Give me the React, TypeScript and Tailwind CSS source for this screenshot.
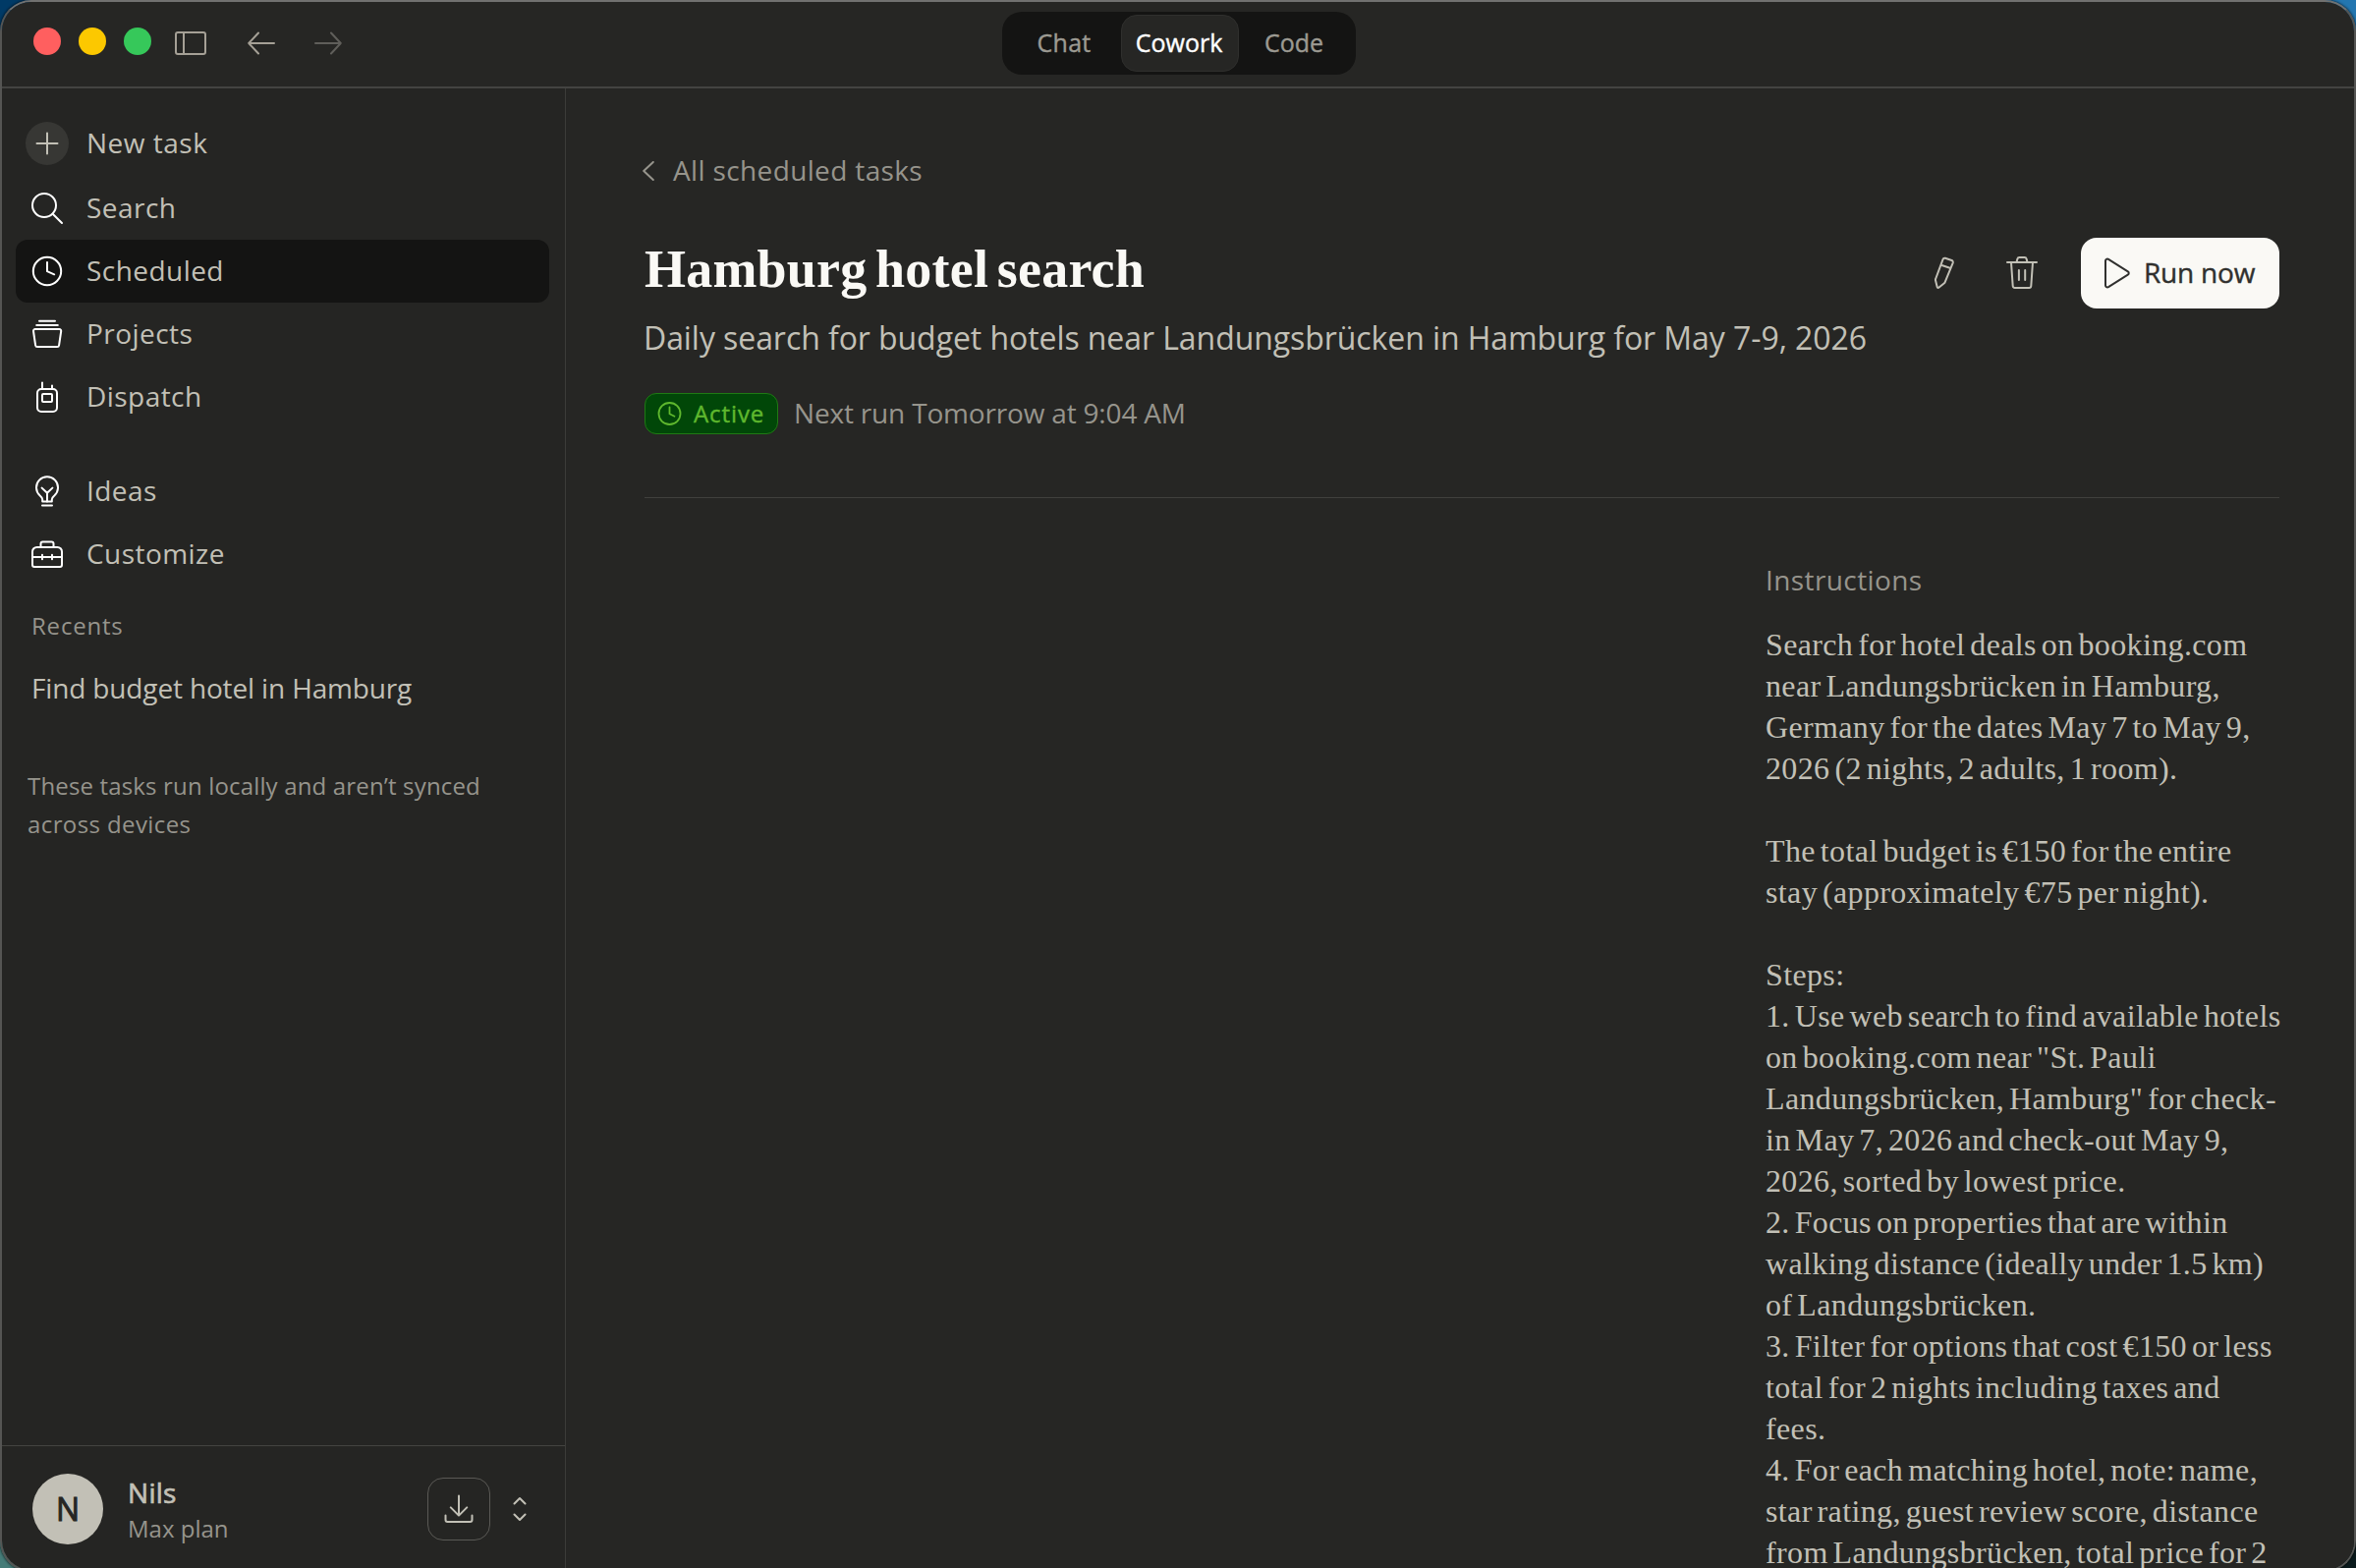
import React from 'react'

type IconProps = { children: React.ReactNode }

const NavIcon = ({ children }: IconProps) => (
  <svg
    viewBox="0 0 48 48"
    className="w-12 h-12 shrink-0 text-white"
    fill="none"
    stroke="currentColor"
    strokeWidth="2"
    strokeLinecap="round"
    strokeLinejoin="round"
  >
    {children}
  </svg>
)

const navItems = [
  {
    title: 'Search',
    icon: (
      <>
        <circle cx="21" cy="21" r="12" />
        <path d="M29.7 29.7 39 39" />
      </>
    ),
  },
  {
    title: 'Scheduled',
    active: true,
    icon: (
      <>
        <circle cx="24" cy="24" r="14.2" />
        <path d="M24 15v9.2l7.2 3.1" />
      </>
    ),
  },
  {
    title: 'Projects',
    icon: (
      <>
        <path d="M16 10.8h16M13.2 14.9h21.6" />
        <path d="M11.8 19h24.6a1.8 1.8 0 0 1 1.8 2l-2.1 14.4a2 2 0 0 1-2 1.7H14.1a2 2 0 0 1-2-1.7L10 21a1.8 1.8 0 0 1 1.8-2Z" />
      </>
    ),
  },
  {
    title: 'Dispatch',
    icon: (
      <>
        <rect x="14" y="16" width="20" height="23" rx="4" />
        <rect x="19" y="21" width="10" height="8" rx="1" />
        <path d="M19 9.5V16M29 12.5V16" />
      </>
    ),
  },
]

const toolItems = [
  {
    title: 'Ideas',
    icon: (
      <>
        <path d="M19.2 34.6h9.6v-2.2c0-1.8.9-2.6 2.5-3.9a11 11 0 1 0-14.6 0c1.6 1.3 2.5 2.1 2.5 3.9v2.2Z" />
        <path d="m18.6 20.6 5.4 5.2 5.4-5.2M24 25.8v8.8M19 38.6h10" />
      </>
    ),
  },
  {
    title: 'Customize',
    icon: (
      <>
        <path d="M13.5 17h21a4.5 4.5 0 0 1 4.5 4.5V35a2 2 0 0 1-2 2H11a2 2 0 0 1-2-2V21.5a4.5 4.5 0 0 1 4.5-4.5Z" />
        <path d="M17.5 17v-3.5a2 2 0 0 1 2-2h9a2 2 0 0 1 2 2V17M9 27h30M19 24.8v4.4M29 24.8v4.4" />
      </>
    ),
  },
]

const instructions = [
  'Search for hotel deals on booking.com',
  'near Landungsbrücken in Hamburg,',
  'Germany for the dates May 7 to May 9,',
  '2026 (2 nights, 2 adults, 1 room).',
  '',
  'The total budget is €150 for the entire',
  'stay (approximately €75 per night).',
  '',
  'Steps:',
  '1. Use web search to find available hotels',
  'on booking.com near "St. Pauli',
  'Landungsbrücken, Hamburg" for check-',
  'in May 7, 2026 and check-out May 9,',
  '2026, sorted by lowest price.',
  '2. Focus on properties that are within',
  'walking distance (ideally under 1.5 km)',
  'of Landungsbrücken.',
  '3. Filter for options that cost €150 or less',
  'total for 2 nights including taxes and',
  'fees.',
  '4. For each matching hotel, note: name,',
  'star rating, guest review score, distance',
  'from Landungsbrücken, total price for 2',
]

const NavRow = ({ title, icon, active }: { title: string; icon: React.ReactNode; active?: boolean }) => (
  <a className={`flex items-center h-16 pl-2 gap-4 rounded-xl ${active ? 'bg-[#141413]' : ''}`}>
    <NavIcon>{icon}</NavIcon>
    <span className="pb-0.5 text-[28px] leading-10 tracking-[0.45px]">{title}</span>
  </a>
)

const TitleBar = () => (
  <header className="grid grid-cols-[1018px_360px_1fr] items-center h-[88px] pb-0.5 shrink-0 bg-[#262624] border-b-2 border-[#434341]">
    <div className="flex items-center pl-8 text-[#a5a096]">
      <div className="flex gap-[18px] mb-1">
        <span className="w-7 h-7 rounded-full bg-[#ff5f5f]"></span>
        <span className="w-7 h-7 rounded-full bg-[#fcc800]"></span>
        <span className="w-7 h-7 rounded-full bg-[#36c85a]"></span>
      </div>
      <svg viewBox="0 0 32 24" className="w-8 h-6 ml-6" fill="none" stroke="currentColor" strokeWidth="2">
        <rect x="1" y="1" width="30" height="22" rx="2" />
        <path d="M9 1v22" />
      </svg>
      <svg viewBox="0 0 28 24" className="w-7 h-6 ml-[42px]" fill="none" stroke="currentColor" strokeWidth="2" strokeLinecap="round" strokeLinejoin="round">
        <path d="M27 12H1.2M11 1.5 1.2 12 11 22.5" />
      </svg>
      <svg viewBox="0 0 28 24" className="w-7 h-6 ml-10 text-[#5f5e5a]" fill="none" stroke="currentColor" strokeWidth="2" strokeLinecap="round" strokeLinejoin="round">
        <path d="M1 12h25.8M17 1.5 26.8 12 17 22.5" />
      </svg>
    </div>
    <div className="flex h-16 p-[3px] rounded-[20px] bg-[#141413] text-[25px] text-[#9c9a92] [-webkit-text-stroke:0.4px]">
      <button className="w-[118px] pb-px pl-0.5 tracking-[0.3px]">Chat</button>
      <button className="w-[120px] pb-px pr-0.5 rounded-2xl bg-[#262624] border border-[#2f2f2d] text-white">Cowork</button>
      <button className="w-[112px] pb-px">Code</button>
    </div>
  </header>
)

const Sidebar = () => (
  <aside className="flex flex-col w-[574px] shrink-0 bg-[#252523] border-r border-[#3c3c39] text-[#c2c0b6]">
    <nav className="flex flex-col pt-6 pl-3.5 pr-4">
      <a className="flex items-center h-16 pl-2.5 mb-0.5 gap-[18px]">
        <span className="flex items-center justify-center w-11 h-11 rounded-full bg-[#373734]">
          <svg viewBox="0 0 24 24" className="w-6 h-6" fill="none" stroke="currentColor" strokeWidth="2" strokeLinecap="round">
            <path d="M12 1.5v21M1.5 12h21" />
          </svg>
        </span>
        <span className="pb-0.5 text-[28px] leading-10 tracking-[0.5px]">New task</span>
      </a>
      {navItems.map((item) => (
        <NavRow key={item.title} {...item} />
      ))}
      <div className="mt-8">
        {toolItems.map((item) => (
          <NavRow key={item.title} {...item} />
        ))}
      </div>
    </nav>
    <h3 className="mt-[23px] pl-[30px] text-2xl leading-9 tracking-[0.8px] text-[#96948c]">Recents</h3>
    <a className="mt-[13px] pl-[30px] text-[28px] leading-[64px] tracking-[-0.15px]">Find budget hotel in Hamburg</a>
    <p className="mt-12 pl-[26px] text-2xl leading-[39px] tracking-[0.16px] text-[#96948c]">
      These tasks run locally and aren’t synced
      <br />
      <span className="tracking-[0.4px]">across devices</span>
    </p>
    <div className="flex items-start mt-auto h-[127px] pt-7 pl-[31px] border-t border-[#444441]">
      <div className="flex items-center justify-center w-[72px] h-[72px] pb-px rounded-full bg-[#c2c0b6] text-[#262624] text-[32px] [-webkit-text-stroke:1px]">
        N
      </div>
      <div className="pt-px pl-[25px] w-[330px]">
        <div className="text-[28px] leading-9 tracking-[0.3px] [-webkit-text-stroke:0.7px]">Nils</div>
        <div className="mt-px text-2xl leading-9 text-[#96948c]">Max plan</div>
      </div>
      <div className="flex items-center justify-center w-16 h-16 mt-1 rounded-2xl border border-[#5a5955]">
        <svg viewBox="0 0 30 30" className="w-[30px] h-[30px]" fill="none" stroke="currentColor" strokeWidth="2" strokeLinecap="round" strokeLinejoin="round">
          <path d="M15 1.5v20M6.8 13.4 15 21.6l8.2-8.2M1.5 21.5V26a2 2 0 0 0 2 2h23a2 2 0 0 0 2-2v-4.5" />
        </svg>
      </div>
      <svg viewBox="0 0 14 28" className="w-3.5 h-7 mt-[22px] ml-[23px]" fill="none" stroke="currentColor" strokeWidth="2" strokeLinecap="round" strokeLinejoin="round">
        <path d="M1.5 8.5 7 3l5.5 5.5M1.5 19.5 7 25l5.5-5.5" />
      </svg>
    </div>
  </aside>
)

const TaskPage = () => (
  <main className="flex-1 pt-[63px] pl-20 pr-[76px] bg-[#262624] text-[#c2c0b6]">
    <a className="flex items-center -ml-0.5 h-10 gap-[19px] text-[#96948c]">
      <svg viewBox="0 0 12 20" className="w-3 h-5 mt-px" fill="none" stroke="currentColor" strokeWidth="2" strokeLinecap="round" strokeLinejoin="round">
        <path d="M10.8 1 1.2 10l9.6 9" />
      </svg>
      <span className="text-[28px] leading-10 tracking-[0.36px]">All scheduled tasks</span>
    </a>

    <div className="flex items-start mt-[49px]">
      <div className="flex-1">
        <h1 className="pt-0.5 font-['Liberation_Serif',serif] text-[54px] leading-[60px] font-bold tracking-[0.2px] [word-spacing:-5px] text-[#faf9f5]">
          Hamburg hotel search
        </h1>
        <p className="mt-[18px] -ml-px text-[32px] leading-[44px] tracking-[-0.07px] whitespace-nowrap">
          Daily search for budget hotels near Landungsbrücken in Hamburg for May 7-9, 2026
        </p>
      </div>
      <svg viewBox="0 0 26 36" className="w-[26px] h-9 mt-[18px]" fill="none" stroke="currentColor" strokeWidth="2" strokeLinejoin="round">
        <path d="m13.9 2.8 6.6 2.2a2 2 0 0 1 1.2 2.6L13.6 27.4a2 2 0 0 1-.7.9l-5.6 4.4a1 1 0 0 1-1.6-.6L4 25.2a2 2 0 0 1 .1-1.2l7.4-19.8a2 2 0 0 1 2.4-1.4ZM9.6 9.8l9.8 3.2" />
      </svg>
      <svg viewBox="0 0 36 36" className="w-9 h-9 mt-[18px] ml-12" fill="none" stroke="currentColor" strokeWidth="2" strokeLinecap="round" strokeLinejoin="round">
        <path d="M3 7h30M12.5 7l.9-3.5A2 2 0 0 1 15.3 2h5.4a2 2 0 0 1 1.9 1.5l.9 3.5M7 7l1.7 24a2 2 0 0 0 2 1.9h14.6a2 2 0 0 0 2-1.9L29 7M14.9 15v10M21.2 15v10" />
      </svg>
      <button className="flex items-center w-[202px] h-[72px] ml-[42px] pl-[22px] gap-3 rounded-2xl bg-[#faf9f5] text-[#30302e]">
        <svg viewBox="0 0 30 32" className="w-[30px] h-8" fill="none" stroke="currentColor" strokeWidth="2" strokeLinejoin="round">
          <path d="M3 3.6a2 2 0 0 1 3-1.7l19.8 12.4a2 2 0 0 1 0 3.4L6 30.1a2 2 0 0 1-3-1.7V3.6Z" />
        </svg>
        <span className="pb-0.5 text-[28px] tracking-[-0.2px] whitespace-nowrap [-webkit-text-stroke:0.4px]">Run now</span>
      </button>
    </div>

    <div className="flex items-center mt-[34px] h-[42px]">
      <span className="flex items-center w-[136px] h-[42px] pl-3 gap-[11px] rounded-xl bg-[#014708] border border-[#1f7a14] text-[#5fb82e]">
        <svg viewBox="0 0 26 26" className="w-[26px] h-[26px]" fill="none" stroke="currentColor" strokeWidth="1.8" strokeLinecap="round" strokeLinejoin="round">
          <circle cx="12.5" cy="13" r="11" />
          <path d="M12.5 6.5v6.7l5 2.5" />
        </svg>
        <span className="text-2xl leading-9 tracking-[0.9px] [-webkit-text-stroke:0.4px]">Active</span>
      </span>
      <span className="pb-0.5 pl-4 text-[28px] leading-10 tracking-[-0.18px] text-[#96948c]">Next run Tomorrow at 9:04 AM</span>
    </div>

    <div className="mt-16 border-t border-[#40403d]"></div>

    <section className="w-[523px] mt-[63px] ml-auto">
      <h2 className="text-[28px] leading-10 text-[#96948c] tracking-[0.4px]">Instructions</h2>
      <div className="mt-[25px] font-['Liberation_Serif',serif] text-[32px] leading-[42px] tracking-[0.36px] [word-spacing:-3.4px]">
        {instructions.map((line, index) => (
          <div key={index} className="h-[42px] whitespace-nowrap">
            {line}
          </div>
        ))}
      </div>
    </section>
  </main>
)

const App = () => {
  return (
    <div className="relative w-[2398px] h-[1596px] overflow-hidden font-['Open_Sans',sans-serif]">
      <div className="absolute inset-0 grid grid-cols-2 grid-rows-2">
        <div className="bg-[#003a66]"></div>
        <div className="bg-[#2376b0]"></div>
        <div className="bg-[#457c78]"></div>
        <div className="bg-[#0a1a1c]"></div>
      </div>
      <div className="relative flex flex-col w-[2398px] h-[1600px] overflow-hidden rounded-[32px] border-2 border-[#555553] border-t-[#717170] shadow-[0_0_3px_#000]">
        <TitleBar />
        <div className="flex flex-1 min-h-0">
          <Sidebar />
          <TaskPage />
        </div>
      </div>
    </div>
  )
}

export default App
